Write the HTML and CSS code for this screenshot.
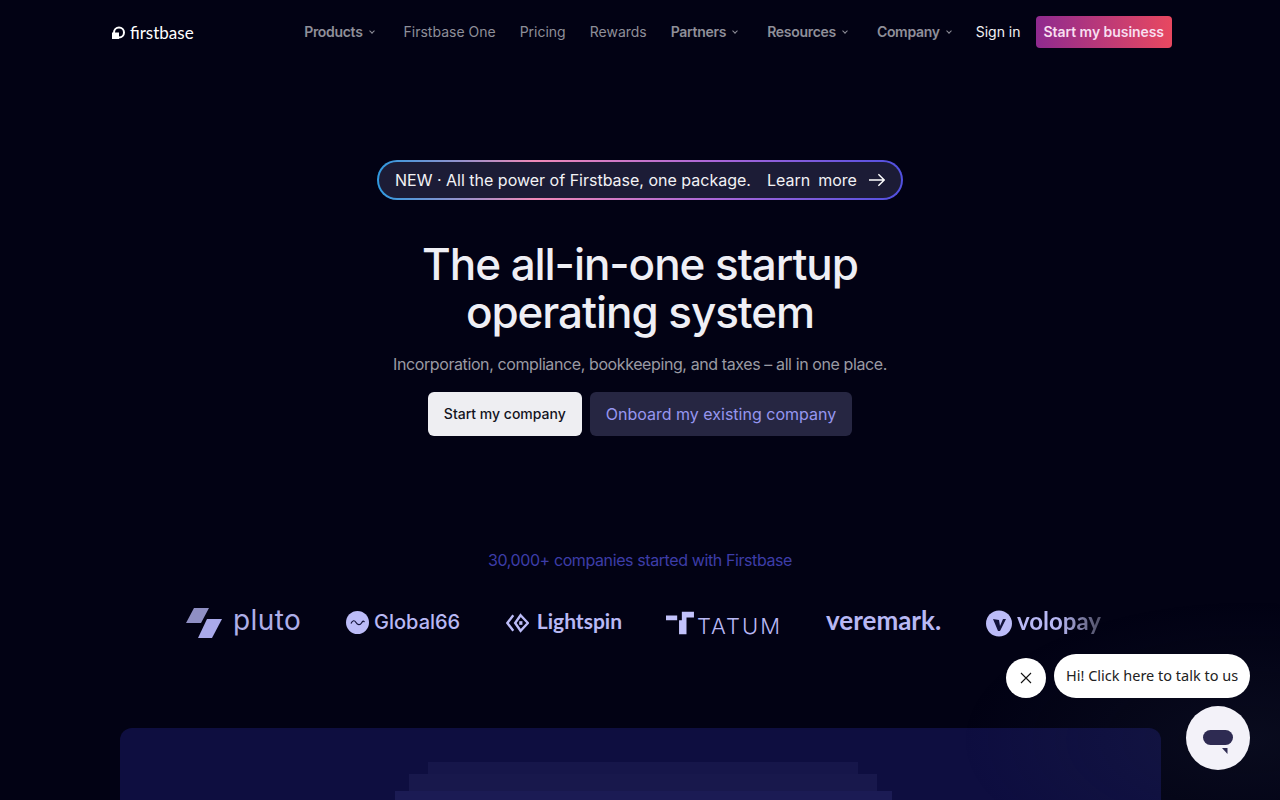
FILE: index.html
```html
<!DOCTYPE html>
<html lang="en">
<head>
    <meta charset="UTF-8">
    <meta name="viewport" content="width=device-width, initial-scale=1.0">
    <title>Firstbase</title>
    <link rel="stylesheet" href="styles.css">
</head>
<body>
    <div class="navbar">
        <a href="#" class="brand">
            <svg class="brand-icon" viewBox="0 0 13 13">
                <circle cx="7" cy="6.500" r="5" fill="none" stroke="#fff" stroke-width="2"/>
                <path d="M0 6.500H7V13H0Z" fill="#fff"/>
            </svg>
            <span>firstbase</span>
        </a>
        <div class="nav-links">
            <a href="#" class="nav-link has-menu">Products <span class="chev"></span></a>
            <a href="#" class="nav-link">Firstbase One</a>
            <a href="#" class="nav-link">Pricing</a>
            <a href="#" class="nav-link">Rewards</a>
            <a href="#" class="nav-link has-menu">Partners <span class="chev"></span></a>
            <a href="#" class="nav-link has-menu">Resources <span class="chev"></span></a>
            <a href="#" class="nav-link has-menu">Company <span class="chev"></span></a>
            <a href="#" class="nav-link signin">Sign in</a>
            <a href="#" class="nav-cta">Start my business</a>
        </div>
    </div>

    <div class="hero">
        <a href="#" class="pill">
            <span>NEW · All the power of Firstbase, one package.</span>
            <span class="pill-more">Learn&nbsp; more</span>
            <svg class="pill-arrow" viewBox="0 0 18 14">
                <path d="M0 7H17M10.500 0.500L17 7L10.500 13.500" fill="none" stroke="#fff" stroke-width="1.600"/>
            </svg>
        </a>
        <h1>The all-in-one startup<br>operating system</h1>
        <p class="sub">Incorporation, compliance, bookkeeping, and taxes – all in one place.</p>
        <div class="hero-btns">
            <a href="#" class="btn btn-light">Start my company</a>
            <a href="#" class="btn btn-dark">Onboard my existing company</a>
        </div>
        <p class="tagline">30,000+ companies started with Firstbase</p>
    </div>

    <!-- customer logos -->
    <div class="logos">
        <div class="logo logo-pluto">
            <svg width="36" height="30" viewBox="0 0 36 30">
                <path d="M8 0H23L15 15H0Z" fill="#8f8fc4"/>
                <path d="M21 11H36L26 30H12Z" fill="#a9a9ea"/>
            </svg>
            <span>pluto</span>
        </div>
        <div class="logo logo-global">
            <svg width="23" height="23" viewBox="0 0 23 23">
                <circle cx="11.500" cy="11.500" r="11.500" fill="#bcbcf8"/>
                <path d="M5 12.500C6.500 9 8.500 9 10 11.500S14 14.500 15.500 12S17.500 10 18.500 11" fill="none" stroke="#12123a" stroke-width="1.200"/>
            </svg>
            <span>Global66</span>
        </div>
        <div class="logo logo-spin">
            <svg width="25" height="20" viewBox="0 0 25 20">
                <path d="M8 1.500L1.500 10L8 18.500" fill="none" stroke="#bcbcf8" stroke-width="2.600"/>
                <path d="M16 1.500L24 10L16 18.500L10 10Z" fill="none" stroke="#bcbcf8" stroke-width="2.600"/>
                <path d="M14.500 8H18V12H14.500Z" fill="#bcbcf8"/>
            </svg>
            <span>Lightspin</span>
        </div>
        <div class="logo logo-tatum">
            <svg width="30" height="24" viewBox="0 0 30 24">
                <path d="M0 4H12V9H0ZM17 0H30V6H22V24H14V9H17Z" fill="#c2c2fb"/>
            </svg>
            <span>TATUM</span>
        </div>
        <div class="logo logo-vere"><span>veremark.</span></div>
        <div class="logo logo-volo">
            <svg width="26" height="27" viewBox="0 0 26 27">
                <circle cx="13" cy="13.500" r="13" fill="#bcbcf8"/>
                <path d="M7 9L13 10L14 16L17 9H20L14 21H12Z" fill="#14143c"/>
            </svg>
            <span>volopay</span>
        </div>
    </div>

    <div class="panel">
        <div class="step step-1"></div>
        <div class="step step-2"></div>
        <div class="step step-3"></div>
    </div>

    <!-- chat widget -->
    <div class="chat-glow"></div>
    <button class="chat-close">
        <svg width="12" height="12" viewBox="0 0 12 12">
            <path d="M1 1L11 11M11 1L1 11" stroke="#111" stroke-width="1.100"/>
        </svg>
    </button>
    <div class="chat-bubble">Hi! Click here to talk to us</div>
    <button class="chat-launcher">
        <svg width="30" height="24" viewBox="0 0 30 24">
            <rect x="0" y="0" width="30" height="15" rx="7.500" fill="#2e2b52"/>
            <path d="M19 18H24.500V24Z" fill="#2e2b52"/>
        </svg>
    </button>
</body>
</html>
```

FILE: styles.css
```css
html, body {
    height: 800px;
    overflow: hidden;
}

body {
    font-family: Inter, Arial, sans-serif;
    margin: 0;
    padding: 0;
    background-color: #020214; /* Almost black navy */
    color: #fff;
    display: flex;
    flex-direction: column;
    align-items: center;
}

a {
    text-decoration: none;
}

.navbar {
    width: 100%;
    height: 64px;
    box-sizing: border-box;
    padding: 0 108px 0 112px;
    display: flex;
    align-items: center;
    justify-content: space-between;
    flex-shrink: 0;
}

.brand {
    display: flex;
    align-items: center;
    gap: 5px;
    color: #fff;
    font-family: Lato, sans-serif;
    font-size: 17px;
    font-weight: 400;
}

.brand-icon {
    width: 13px;
    height: 13px;
}

.nav-links {
    display: flex;
    align-items: center;
    font-size: 14px;
    line-height: 20px;
}

.nav-link {
    color: #8f8f99;
    margin-right: 24px;
    display: flex;
    align-items: center;
    white-space: nowrap;
}

.has-menu {
    font-weight: 600;
    letter-spacing: -0.3px;
    margin-right: 29px;
    gap: 7px;
}

.chev {
    width: 3px;
    height: 3px;
    border-right: 1px solid #8f8f99;
    border-bottom: 1px solid #8f8f99;
    transform: translateY(-1px) rotate(45deg);
    margin-right: 1px;
}

.signin {
    color: #f2f2f5;
    font-weight: 400;
    margin-left: -5px;
    margin-right: 15px;
}

.nav-cta {
    height: 32px;
    box-sizing: border-box;
    padding: 0 8px;
    display: flex;
    align-items: center;
    color: #f8dff0;
    font-weight: 600;
    letter-spacing: -0.06px;
    border-radius: 4px;
    background: linear-gradient(90deg, #8f2a8f, #e84860);
    white-space: nowrap;
}

.hero {
    display: flex;
    flex-direction: column;
    align-items: center;
    padding-top: 96px;
    flex-shrink: 0;
}

.pill {
    width: 526px;
    height: 40px;
    box-sizing: border-box;
    padding: 0 16px;
    display: flex;
    align-items: center;
    color: #f2f2f5;
    font-size: 16px;
    white-space: nowrap;
    border: 2px solid transparent;
    border-radius: 20px;
    background:
        linear-gradient(#1c1c36, #1c1c36) padding-box,
        linear-gradient(90deg, #2f9ae0, #f08ab8 30%, #a866d8 65%, #5050e0) border-box;
}

.pill-more {
    margin-left: 16px;
    word-spacing: -0.5px;
}

.pill-arrow {
    width: 18px;
    height: 14px;
    margin-left: 12px;
}

h1 {
    margin: 40px 0 0;
    font-size: 44px;
    line-height: 48px;
    font-weight: 500;
    letter-spacing: -1.06px;
    text-align: center;
    color: #efeff5;
}

.sub {
    margin: 16px 0 0;
    font-size: 16px;
    line-height: 24px;
    color: #9a9aa3;
    letter-spacing: -0.4px;
}

.hero-btns {
    display: flex;
    gap: 8px;
    margin-top: 16px;
}

.btn {
    height: 44px;
    box-sizing: border-box;
    padding: 0 16px;
    display: flex;
    align-items: center;
    border-radius: 6px;
    white-space: nowrap;
}

.btn-light {
    background-color: #eeeef2;
    color: #14141e;
    font-size: 14px;
    font-weight: 500;
    padding-bottom: 1px;
}

.btn-dark {
    background-color: #262642;
    color: #9696f0;
    font-size: 16px;
}

.tagline {
    margin: 112px 0 0;
    font-size: 16px;
    line-height: 24px;
    color: #3d3da8;
    letter-spacing: -0.4px;
}

.logos {
    display: flex;
    gap: 44px;
    margin-top: 28px;
    margin-left: 8px;
    height: 46px;
    align-items: center;
    flex-shrink: 0;
}

.logo {
    width: 116px;
    display: flex;
    align-items: center;
    color: #b8b8f4;
    white-space: nowrap;
}

.logo span {
    margin-bottom: 6px; /* wordmarks sit a little above the icon middle */
}

.logo-pluto {
    gap: 11px;
    font-family: Inter, sans-serif;
    font-size: 28px;
    letter-spacing: 0.4px;
    color: #aeaee8;
}

.logo-global {
    gap: 5px;
    margin-bottom: 2px;
    font-family: Inter, sans-serif;
    font-size: 20px;
    font-weight: 500;
}

.logo-global span {
    margin-bottom: 0;
}

.logo-spin {
    gap: 8px;
    font-family: Lato, sans-serif;
    font-size: 21px;
    font-weight: 700;
}

.logo-tatum {
    gap: 3px;
    font-family: Inter, sans-serif;
    font-size: 22px;
    font-weight: 300;
    letter-spacing: 2px;
    align-items: flex-end;
}

.logo-tatum span {
    line-height: 20px;
    margin-bottom: -1px;
}

.logo-vere {
    font-family: Lato, sans-serif;
    font-size: 26px;
    font-weight: 700;
}

.logo-volo {
    gap: 5px;
    font-family: Lato, sans-serif;
    font-size: 24px;
    font-weight: 700;
}

.logo-volo span {
    background: linear-gradient(90deg, #b8b8f4 50%, #55556e 95%);
    -webkit-background-clip: text;
    background-clip: text;
    color: transparent;
}

.panel {
    width: 1041px;
    height: 72px;
    box-sizing: border-box;
    margin-top: 82px;
    margin-right: -1px;
    background-color: #0e0e40;
    border-radius: 12px 12px 0 0;
    display: flex;
    flex-direction: column;
    align-items: center;
    padding: 34px 0 0 5px;
    flex-shrink: 0;
}

.step-1 {
    width: 430px;
    height: 12px;
    background-color: #16164a;
}

.step-2 {
    width: 468px;
    height: 17px;
    background-color: #18184c;
}

.step-3 {
    width: 497px;
    height: 9px;
    background-color: #1b1b54;
}

.chat-glow {
    position: fixed;
    right: 0;
    bottom: 0;
    width: 320px;
    height: 200px;
    background: radial-gradient(ellipse at 90% 70%, rgba(40, 50, 70, 0.2), rgba(2, 2, 20, 0) 70%);
    pointer-events: none;
}

.chat-close {
    position: fixed;
    left: 1006px;
    top: 658px;
    width: 40px;
    height: 40px;
    padding: 0;
    border: none;
    border-radius: 50%;
    background-color: #fff;
    display: flex;
    align-items: center;
    justify-content: center;
}

.chat-bubble {
    position: fixed;
    left: 1054px;
    top: 654px;
    width: 196px;
    height: 44px;
    box-sizing: border-box;
    padding: 0 0 2px 12px;
    display: flex;
    align-items: center;
    background-color: #fff;
    border-radius: 22px;
    color: #222;
    font-family: "Noto Sans", sans-serif;
    font-size: 14.5px;
    white-space: nowrap;
}

.chat-launcher {
    position: fixed;
    left: 1186px;
    top: 706px;
    width: 64px;
    height: 64px;
    padding: 0;
    border: none;
    border-radius: 50%;
    background-color: #f3f2f9;
    display: flex;
    align-items: center;
    justify-content: center;
}

.chat-launcher svg {
    margin-top: 7px;
}
```
